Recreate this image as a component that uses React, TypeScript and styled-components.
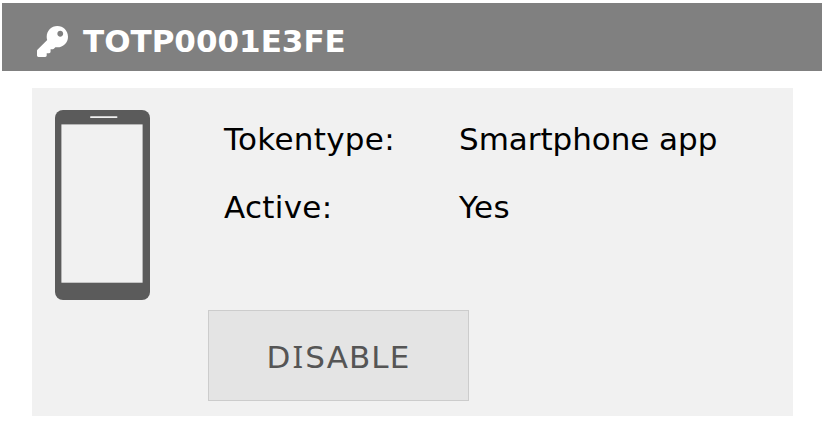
import React from "react";
import styled, { createGlobalStyle } from "styled-components";
import { FaKey } from "react-icons/fa";

const GlobalStyle = createGlobalStyle`
  body {
    margin: 0;
    background: #fff;
    color: #000;
    font-family: Verdana, "DejaVu Sans", sans-serif;
  }
`;

const Page = styled.main`
  box-sizing: border-box;
  width: 822px;
  height: 438px;
  padding: 3px 0 0 2px;
  overflow: hidden;
`;

const Header = styled.header`
  box-sizing: border-box;
  display: flex;
  align-items: center;
  height: 68px;
  padding: 8px 0 0 35px;
  gap: 15px;
  background: #808080;
  color: #fff;
`;

const KeyIcon = styled(FaKey)`
  width: 31px;
  height: 31px;
`;

const Title = styled.h1`
  margin: 0;
  font-size: 31px;
  line-height: 40px;
  font-weight: 700;
`;

const Card = styled.section`
  box-sizing: border-box;
  display: flex;
  width: 761px;
  height: 328px;
  margin: 17px 0 0 30px;
  padding: 22px 0 0 23px;
  gap: 58px;
  background: #f1f1f1;
`;

const Phone = styled.svg`
  flex: none;
  width: 95px;
  height: 190px;
`;

const Details = styled.div`
  display: flex;
  flex-direction: column;
  align-items: flex-start;
`;

const Properties = styled.dl`
  display: grid;
  grid-template-columns: 235px 300px;
  grid-auto-rows: 68px;
  margin: 0;
  padding: 8px 0 0 16px;
  height: 192px;
  box-sizing: border-box;
  font-size: 31px;
  line-height: 42px;
`;

const Label = styled.dt`
  margin: 0;
  letter-spacing: 0.3px;
`;

const Value = styled.dd<{ $tracking?: number }>`
  margin: 0;
  letter-spacing: ${({ $tracking = 0 }) => $tracking}px;
`;

const Button = styled.button`
  box-sizing: border-box;
  width: 261px;
  height: 91px;
  margin: 8px 0 0;
  padding: 3px 0 0;
  border: 1px solid #ccc;
  background: #e4e4e4;
  color: #555;
  font: inherit;
  font-size: 31px;
  line-height: 38px;
  letter-spacing: 1.1px;
`;

/* The capital I is set in a face that gives it crossbars. */
const BarredLetter = styled.span`
  margin: 0 1px;
  font-family: Verdana, "Noto Sans", sans-serif;
  font-size: 31.5px;
  line-height: 1;
`;

export default function App() {
  return (
    <Page>
      <GlobalStyle />
      <Header>
        <KeyIcon />
        <Title>TOTP0001E3FE</Title>
      </Header>
      <Card>
        <Phone viewBox="0 0 95 190">
          <rect width="95" height="190" rx="8" fill="#5b5b5b" />
          <rect x="6.4" y="14.4" width="81.2" height="158.3" fill="#f1f1f1" />
          <rect x="35" y="6.2" width="27.5" height="1.8" rx="0.9" fill="#f1f1f1" />
        </Phone>
        <Details>
          <Properties>
            <Label>Tokentype:</Label>
            <Value $tracking={-0.05}>Smartphone app</Value>
            <Label>Active:</Label>
            <Value $tracking={0.3}>Yes</Value>
          </Properties>
          <Button>D<BarredLetter>I</BarredLetter>SABLE</Button>
        </Details>
      </Card>
    </Page>
  );
}
